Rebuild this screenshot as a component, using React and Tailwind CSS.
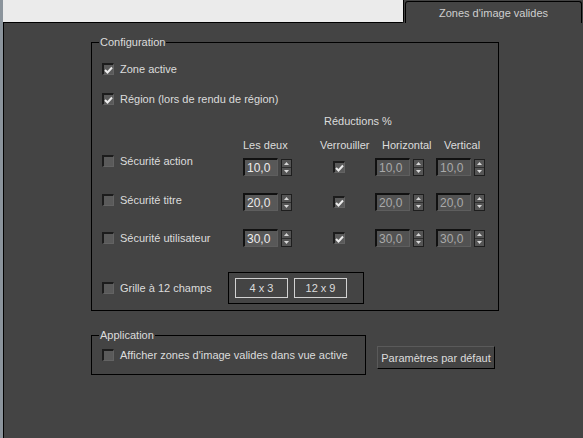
import React from "react";

function Check({ checked }) {
  return (
    <div className="w-[12px] h-[12px] shrink-0 bg-[#5a5a5a] border-t-2 border-l-2 border-b border-r border-t-[#1c1c1c] border-l-[#1c1c1c] border-b-[#636363] border-r-[#636363] flex items-center justify-center">
      {checked && (
        <svg width="9" height="8" viewBox="0 0 9 8">
          <polyline points="1,4 3.5,6.5 8,1.5" fill="none" stroke="#ececec" strokeWidth="2" />
        </svg>
      )}
    </div>
  );
}

function Spinner() {
  return (
    <div className="w-[11px] h-[17px] shrink-0 border border-[#1e1e1e] bg-[#555] flex flex-col">
      <div className="flex-1 flex items-center justify-center border-b border-[#2e2e2e]">
        <svg width="5" height="3" viewBox="0 0 5 3">
          <polygon points="0,3 2.5,0 5,3" fill="#d8d8d8" />
        </svg>
      </div>
      <div className="flex-1 flex items-center justify-center">
        <svg width="5" height="3" viewBox="0 0 5 3">
          <polygon points="0,0 2.5,3 5,0" fill="#d8d8d8" />
        </svg>
      </div>
    </div>
  );
}

function Num({ value, disabled }) {
  return (
    <div className="flex items-center gap-[3px]">
      <div
        className={
          "w-[35px] h-[18px] border-t-2 border-l-2 border-b border-r border-t-[#111] border-l-[#111] border-b-[#5e5e5e] border-r-[#5e5e5e] flex items-center pl-[2px] text-[12px] " +
          (disabled ? "bg-[#525252] text-[#a9a9a9]" : "bg-[#585858] text-[#ececec]")
        }
      >
        {value}
      </div>
      <Spinner />
    </div>
  );
}

function SafeRow({ label, value, h, shift }) {
  return (
    <div className={"flex items-center " + h}>
      <div className={"w-[151px] pl-[10px] flex items-center gap-[6px] " + shift}>
        <Check />
        <span>{label}</span>
      </div>
      <div className="w-[90px]">
        <Num value={value} />
      </div>
      <div className="w-[42px]">
        <Check checked />
      </div>
      <div className="w-[61px]">
        <Num value={value} disabled />
      </div>
      <div>
        <Num value={value} disabled />
      </div>
    </div>
  );
}

export default function App() {
  return (
    <div className="w-[583px] h-[438px] flex bg-[#444444] overflow-hidden font-['Liberation_Sans',Arial,sans-serif] text-[11px] leading-[14px] text-[#dcdcdc]">
      <div className="w-[3px] h-full shrink-0 bg-[#8b949c]" />
      <div className="flex-1 flex flex-col min-w-0">
        <div className="h-[23px] flex shrink-0">
          <div className="w-[401px] h-full bg-[#ebebeb] border-r border-b border-black rounded-br-[2px]" />
          <div className="flex-1 mt-[1px] ml-[1px] mr-[1px] border-l border-t border-r border-black rounded-t-[3px] flex items-center justify-center text-[11px] text-[#cfcfcf]">
            Zones d'image valides
          </div>
        </div>
        <div className="flex-1 border-l border-black pl-[87px]">
          <fieldset className="mt-[12px] w-[408px] h-[276px] border border-black">
            <legend className="ml-[7px] px-[1px] leading-[14px]">Configuration</legend>
            <div className="h-[5px]" />
            <div className="h-[30px] flex items-center pl-[10px] gap-[6px]">
              <Check checked />
              <span>Zone active</span>
            </div>
            <div className="h-[30px] flex items-center pl-[10px] gap-[6px]">
              <Check checked />
              <span>Région (lors de rendu de région)</span>
            </div>
            <div className="h-[14px] flex">
              <span className="ml-[232px]">Réductions %</span>
            </div>
            <div className="h-[14px] mt-[10px] flex">
              <span className="ml-[151px] w-[77px]">Les deux</span>
              <span className="w-[50px]">Verrouiller</span>
              <span className="ml-[12px] w-[62px]">Horizontal</span>
              <span>Vertical</span>
            </div>
            <SafeRow label="Sécurité action" value="10,0" h="h-[30px]" shift="mb-[12px]" />
            <SafeRow label="Sécurité titre" value="20,0" h="h-[40px]" shift="mb-[4px]" />
            <SafeRow label="Sécurité utilisateur" value="30,0" h="h-[32px]" shift="" />
            <div className="mt-[18px] h-[32px] flex items-center">
              <div className="w-[136px] pl-[10px] flex items-center gap-[6px]">
                <Check />
                <span>Grille à 12 champs</span>
              </div>
              <div className="w-[136px] h-[32px] border border-black flex items-center pl-[6px] gap-[6px]">
                <div className="w-[53px] h-[20px] border border-[#d2d2d2] flex items-center justify-center">4 x 3</div>
                <div className="w-[53px] h-[20px] border border-[#d2d2d2] flex items-center justify-center">12 x 9</div>
              </div>
            </div>
          </fieldset>
          <div className="flex items-start mt-[17px]">
            <fieldset className="w-[275px] h-[47px] border border-black">
              <legend className="ml-[7px] px-[1px] leading-[14px]">Application</legend>
              <div className="h-[26px] flex items-center pl-[10px] gap-[6px]">
                <Check />
                <span>Afficher zones d'image valides dans vue active</span>
              </div>
            </fieldset>
            <div className="ml-[11px] mt-[18px] w-[118px] h-[23px] border-t border-l border-b border-r border-t-[#5a5a5a] border-l-[#5a5a5a] border-b-black border-r-black flex items-center justify-center">
              Paramètres par défaut
            </div>
          </div>
        </div>
      </div>
    </div>
  );
}
